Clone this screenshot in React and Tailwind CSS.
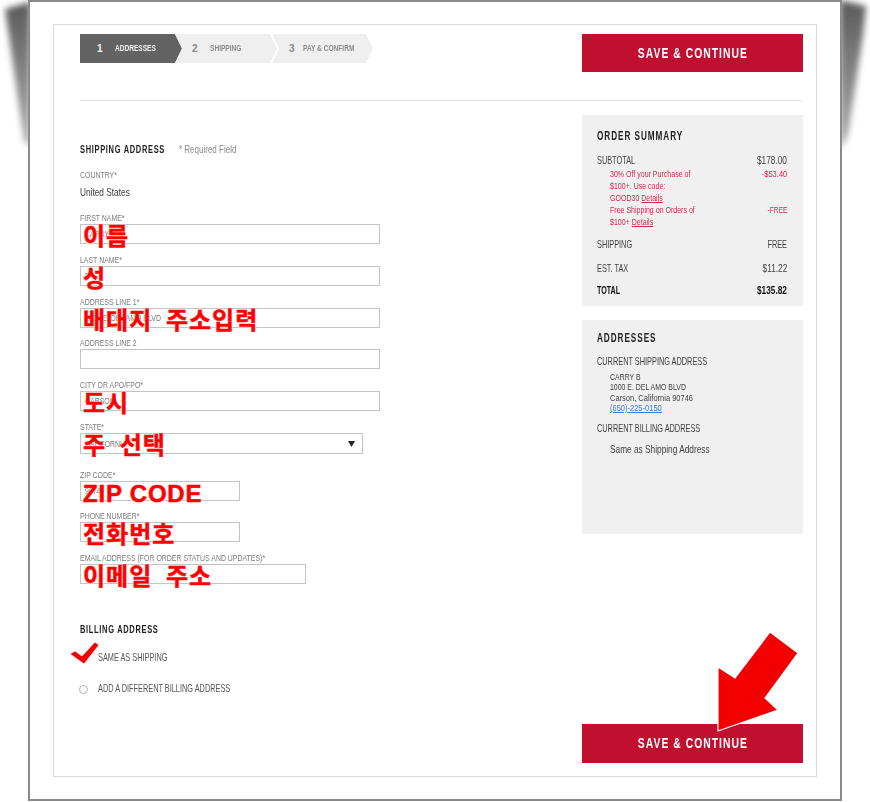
import React from "react";

// condensed look: Liberation Sans squeezed horizontally
const cond = "inline-block whitespace-nowrap origin-left scale-x-[0.7]";
const condLabel = "inline-block whitespace-nowrap origin-left scale-x-[0.73]";
const condMix = "inline-block whitespace-nowrap origin-left scale-x-[0.79]";
const condPromo = "inline-block whitespace-nowrap origin-left scale-x-[0.74]";
const condHead = "inline-block whitespace-nowrap origin-left scale-x-[0.68]";
const condBox = "inline-block whitespace-nowrap origin-left scale-x-[0.63]";
const condR = "inline-block whitespace-nowrap origin-right scale-x-[0.7]";
const condNumR = "inline-block whitespace-nowrap origin-right scale-x-[0.79]";
const note =
  "absolute left-[2px] top-[0px] whitespace-nowrap text-[24px] leading-[24px] font-bold text-[#ff0000] [-webkit-text-stroke:0.5px_#ff0000] [text-shadow:0_0_2px_#fff,0_0_1px_#fff]";

const fields = [
  { label: "FIRST NAME*", mt: "mt-[14px]", w: "w-[300px]", value: "CARRY", note: "이름" },
  { label: "LAST NAME*", mt: "mt-[10px]", w: "w-[300px]", value: "B", note: "성" },
  { label: "ADDRESS LINE 1*", mt: "mt-[10px]", w: "w-[300px]", value: "1000 E. DEL AMO BLVD", note: "배대지 주소입력" },
  { label: "ADDRESS LINE 2", mt: "mt-[9px]", w: "w-[300px]" },
  { label: "CITY OR APO/FPO*", mt: "mt-[10px]", w: "w-[300px]", value: "CARSON", note: "도시" },
  { label: "STATE*", mt: "mt-[10px]", w: "w-[283px]", h: "h-[21px]", value: "CALIFORNIA", note: "주 선택", select: true },
  { label: "ZIP CODE*", mt: "mt-[15px]", w: "w-[160px]", value: "90746", note: "ZIP CODE", latin: true },
  { label: "PHONE NUMBER*", mt: "mt-[9px]", w: "w-[160px]", note: "전화번호" },
  { label: "EMAIL ADDRESS (FOR ORDER STATUS AND UPDATES)*", mt: "mt-[10px]", w: "w-[226px]", note: "이메일 주소" },
];

const Field = ({ f }) => (
  <div className={f.mt}>
    <div className="h-[12px] text-[9.5px] leading-[12px] text-[#7b7b7b]">
      <span className={condLabel}>{f.label}</span>
    </div>
    <div
      className={`relative flex items-center justify-between border border-[#c4c4c4] bg-white pl-[4px] pr-[7px] ${f.w} ${f.h || "h-[20px]"}`}
    >
      <span className="text-[9.5px] leading-[12px] text-[#777]">
        <span className={condLabel}>{f.value}</span>
      </span>
      {f.select && (
        <svg width="7" height="6" viewBox="0 0 7 6">
          <path d="M0 0H7L3.5 6Z" fill="#222" />
        </svg>
      )}
      {f.note && (
        <span className={`${note} ${f.latin ? "tracking-[0.8px]" : "tracking-[1px] [word-spacing:6px]"}`}>
          {f.note}
        </span>
      )}
    </div>
  </div>
);

const Step = ({ n, label, active, className }) => (
  <div
    className={`flex h-[29px] items-center pl-[17px] ${className} ${
      active ? "bg-[#636363] text-[#f2f2f2]" : "bg-[#efefef] text-[#8a8a8a]"
    }`}
  >
    <span className="w-[18px] text-[10px] font-bold">{n}</span>
    <span className="text-[9px] font-bold">
      <span className={condLabel}>{label}</span>
    </span>
  </div>
);

const SaveButton = () => (
  <div className="flex h-full w-full items-center justify-center bg-[#c20e2f] text-[15px] font-bold tracking-[1.5px] text-white">
    <span className="inline-block origin-center scale-x-[0.69] whitespace-nowrap">SAVE &amp; CONTINUE</span>
  </div>
);

const Row = ({ left, right, className, bold }) => (
  <div className={`flex justify-between text-[10.5px] leading-[12px] ${bold ? "font-bold text-[#111]" : ""} ${className}`}>
    <span className={bold ? condHead : cond}>{left}</span>
    <span className={right === "FREE" ? condR : condNumR}>{right}</span>
  </div>
);

export default function App() {
  return (
    <div className="relative h-[802px] w-[870px] overflow-hidden bg-white font-['Liberation_Sans','Noto_Sans_CJK_KR',sans-serif]">
      {/* page shadows behind the frame */}
      <svg className="absolute left-0 top-0" width="28" height="170" viewBox="0 0 28 170">
        <defs>
          <filter id="bl" x="-50%" y="-20%" width="200%" height="140%">
            <feGaussianBlur stdDeviation="3" />
          </filter>
          <linearGradient id="gl" x1="0" y1="0" x2="0" y2="1">
            <stop offset="0" stopColor="#5a5a5a" />
            <stop offset="1" stopColor="#b0b0b0" />
          </linearGradient>
        </defs>
        <polygon points="5,9 30,2 30,148 24,140" fill="url(#gl)" filter="url(#bl)" />
      </svg>
      <svg className="absolute left-[842px] top-0" width="28" height="170" viewBox="0 0 28 170">
        <defs>
          <filter id="br" x="-50%" y="-20%" width="200%" height="140%">
            <feGaussianBlur stdDeviation="3" />
          </filter>
          <linearGradient id="gr" x1="0" y1="0" x2="0" y2="1">
            <stop offset="0" stopColor="#5a5a5a" />
            <stop offset="1" stopColor="#b0b0b0" />
          </linearGradient>
        </defs>
        <polygon points="-2,0 24,6 21,35 6,135 -2,150" fill="url(#gr)" filter="url(#br)" />
      </svg>

      {/* frame */}
      <div className="ml-[28px] h-[801px] w-[814px] border-2 border-[#8b8b8b] bg-white pl-[23px] pt-[22px]">
        <div className="flex h-[753px] w-[764px] flex-col border border-[#dadada] pb-[13px] pl-[26px] pr-[13px] pt-[9px]">
          {/* steps + top button */}
          <div className="flex items-start justify-between">
            <div className="flex">
              <Step
                n="1"
                label="ADDRESSES"
                active
                className="w-[102px] [clip-path:polygon(0_0,calc(100%_-_7px)_0,100%_50%,calc(100%_-_7px)_100%,0_100%)]"
              />
              <Step
                n="2"
                label="SHIPPING"
                className="-ml-[7px] w-[102px] [clip-path:polygon(0_0,calc(100%_-_7px)_0,100%_50%,calc(100%_-_7px)_100%,0_100%,7px_50%)]"
              />
              <Step
                n="3"
                label="PAY & CONFIRM"
                className="-ml-[5px] w-[101px] [clip-path:polygon(0_0,calc(100%_-_7px)_0,100%_50%,calc(100%_-_7px)_100%,0_100%,7px_50%)]"
              />
            </div>
            <div className="h-[38px] w-[221px]">
              <SaveButton />
            </div>
          </div>

          <div className="mt-[28px] h-px bg-[#e3e3e3]" />

          <div className="flex flex-1">
            {/* form */}
            <div className="flex-1 pt-[41px]">
              <div className="flex h-[14px] items-baseline leading-[14px]">
                <div className="w-[99px] shrink-0 text-[11px] font-bold tracking-[1px] text-[#1e1e1e]">
                  <span className={condHead}>SHIPPING ADDRESS</span>
                </div>
                <div className="text-[10px] text-[#8a8a8a]">
                  <span className="inline-block origin-left scale-x-[0.8] whitespace-nowrap">* Required Field</span>
                </div>
              </div>

              <div className="mt-[13px] h-[11px] text-[9.5px] leading-[11px] text-[#7b7b7b]">
                <span className={condLabel}>COUNTRY*</span>
              </div>
              <div className="mt-[6px] h-[12px] text-[10.5px] leading-[12px] text-[#3c3c3c]">
                <span className={condMix}>United States</span>
              </div>

              {fields.map((f) => (
                <Field key={f.label} f={f} />
              ))}

              <div className="mt-[38px] h-[14px] text-[11px] font-bold leading-[14px] tracking-[1px] text-[#1e1e1e]">
                <span className={condHead}>BILLING ADDRESS</span>
              </div>
              <div className="relative mt-[15px] flex h-[14px] items-center text-[10.5px] text-[#555]">
                <span className="-ml-[1px] mr-[10px] flex h-[9px] w-[9px] items-center justify-center rounded-full border border-[#b0b0b0] bg-white">
                  <span className="h-[5px] w-[5px] rounded-full bg-[#555]" />
                </span>
                <span className={cond}>SAME AS SHIPPING</span>
                <svg className="absolute left-[-12px] top-[-12px]" width="34" height="28" viewBox="0 0 34 28">
                  <polygon
                    points="2,15 7,12 14,17 27,3 31,6 16,25"
                    fill="#f20000"
                    stroke="#fff"
                    strokeWidth="0.8"
                    strokeLinejoin="round"
                  />
                </svg>
              </div>
              <div className="mt-[17px] flex h-[14px] items-center text-[10.5px] text-[#555]">
                <span className="-ml-[1px] mr-[10px] h-[9px] w-[9px] rounded-full border border-[#b0b0b0] bg-white" />
                <span className={cond}>ADD A DIFFERENT BILLING ADDRESS</span>
              </div>
            </div>

            {/* sidebar */}
            <div className="flex w-[221px] flex-col pt-[14px]">
              <div className="h-[191px] bg-[#f0f0f0] pl-[15px] pr-[16px] pt-[13px] text-[#404040]">
                <div className="h-[16px] text-[13px] font-bold leading-[16px] tracking-[1.5px] text-[#222]">
                  <span className={condBox}>ORDER SUMMARY</span>
                </div>
                <Row className="mt-[10px]" left="SUBTOTAL" right="$178.00" />
                <div className="mt-[2px] pl-[13px] text-[9.5px] leading-[12px] text-[#d02a4a]">
                  <div className="flex items-start justify-between">
                    <div>
                      <div><span className={condPromo}>30% Off your Purchase of</span></div>
                      <div><span className={condPromo}>$100+. Use code:</span></div>
                      <div>
                        <span className={condPromo}>
                          GOOD30 <span className="underline">Details</span>
                        </span>
                      </div>
                    </div>
                    <span className={condNumR}>-$53.40</span>
                  </div>
                  <div className="flex items-start justify-between">
                    <div>
                      <div><span className={condPromo}>Free Shipping on Orders of</span></div>
                      <div>
                        <span className={condPromo}>
                          $100+ <span className="underline">Details</span>
                        </span>
                      </div>
                    </div>
                    <span className={condR}>-FREE</span>
                  </div>
                </div>
                <Row className="mt-[10px]" left="SHIPPING" right="FREE" />
                <Row className="mt-[12px]" left="EST. TAX" right="$11.22" />
                <Row className="mt-[10px]" left="TOTAL" right="$135.82" bold />
              </div>

              <div className="mt-[14px] h-[214px] bg-[#f0f0f0] pl-[15px] pr-[16px] pt-[10px] text-[#404040]">
                <div className="h-[16px] text-[13px] font-bold leading-[16px] tracking-[1.5px] text-[#222]">
                  <span className={condBox}>ADDRESSES</span>
                </div>
                <div className="mt-[9px] text-[10.5px] leading-[12px]">
                  <span className={cond}>CURRENT SHIPPING ADDRESS</span>
                </div>
                <div className="mt-[5px] pl-[13px] text-[9.5px] leading-[10.4px]">
                  <div><span className={condLabel}>CARRY B</span></div>
                  <div><span className={condLabel}>1000 E. DEL AMO BLVD</span></div>
                  <div><span className={condMix}>Carson, California 90746</span></div>
                  <div>
                    <span className={`${condMix} text-[#3a7bd5] underline`}>(650)-225-0150</span>
                  </div>
                </div>
                <div className="mt-[8px] text-[10.5px] leading-[12px]">
                  <span className={cond}>CURRENT BILLING ADDRESS</span>
                </div>
                <div className="mt-[9px] pl-[13px] text-[10.5px] leading-[12px]">
                  <span className={condMix}>Same as Shipping Address</span>
                </div>
              </div>

              <div className="relative mt-auto h-[39px]">
                <SaveButton />
                <svg className="absolute left-[130px] top-[-98px]" width="92" height="112" viewBox="0 0 92 112">
                  <polygon
                    points="58,6 86,27 53,72 66,84 6,105 6,41 23,52"
                    fill="#f20000"
                    stroke="#fff"
                    strokeWidth="1.2"
                    strokeLinejoin="round"
                  />
                </svg>
              </div>
            </div>
          </div>
        </div>
      </div>
    </div>
  );
}
